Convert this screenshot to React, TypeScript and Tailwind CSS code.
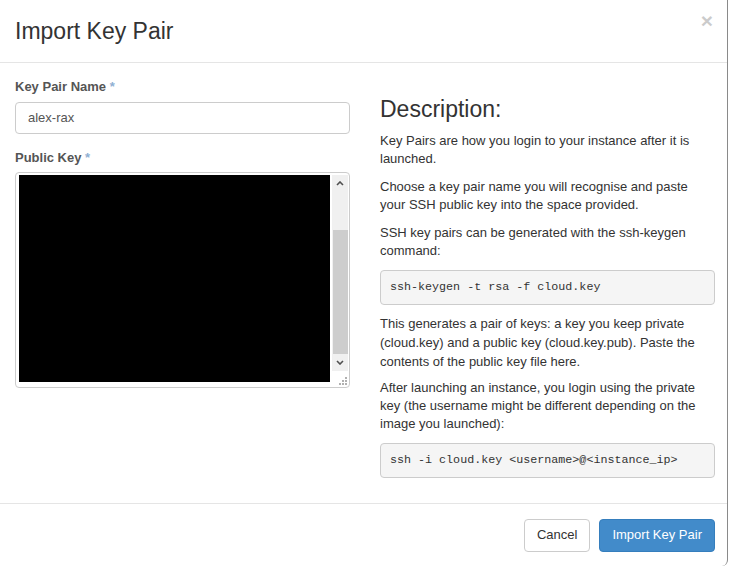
import React from "react";

const sans = "font-['Liberation_Sans',Arial,Helvetica,sans-serif]";
const mono = "font-['Liberation_Mono','Courier_New',monospace]";

function Label({ text }: { text: string }) {
  return (
    <label className="block mb-[5px] text-[13px] leading-[18.57px] font-bold text-[#555]">
      {text} <span className="text-[#8fb0d3]">*</span>
    </label>
  );
}

function FakeTextarea() {
  return (
    <div className="relative h-[216px] border border-[#ccc] rounded-[4px] bg-white pt-[2px] pl-[3px] pr-[1px] flex">
      {/* redacted key contents */}
      <div className="w-[312px] h-[207px] bg-black" />
      <div className="ml-[2px] w-[16px] h-[196px] bg-[#f0f0f0] flex flex-col items-center">
        <div className="h-[17px] w-full flex items-center justify-center">
          <svg width="8" height="5" viewBox="0 0 8 5">
            <path d="M1 4 L4 1 L7 4" fill="none" stroke="#505050" strokeWidth="1.6" />
          </svg>
        </div>
        <div className="mt-[38px] w-[15px] h-[124px] bg-[#cdcdcd]" />
        <div className="mt-auto h-[17px] w-full flex items-center justify-center">
          <svg width="8" height="5" viewBox="0 0 8 5">
            <path d="M1 1 L4 4 L7 1" fill="none" stroke="#505050" strokeWidth="1.6" />
          </svg>
        </div>
      </div>
      {/* resize grip */}
      <svg className="absolute right-[1px] bottom-[1px]" width="10" height="10" viewBox="0 0 10 10">
        <rect x="7" y="1" width="2" height="2" fill="#b0b0b0" />
        <rect x="4" y="4" width="2" height="2" fill="#b0b0b0" />
        <rect x="7" y="4" width="2" height="2" fill="#b0b0b0" />
        <rect x="1" y="7" width="2" height="2" fill="#b0b0b0" />
        <rect x="4" y="7" width="2" height="2" fill="#b0b0b0" />
        <rect x="7" y="7" width="2" height="2" fill="#b0b0b0" />
      </svg>
    </div>
  );
}

function Pre({ children, last }: { children: React.ReactNode; last?: boolean }) {
  return (
    <pre
      className={`${mono} ${last ? "h-[35px]" : ""} mb-[10px] border border-[#ccc] rounded-[4px] bg-[#f5f5f5] px-[9px] py-[8px] text-[11.7px] leading-[17px] text-[#333]`}
    >
      {children}
    </pre>
  );
}

export default function App() {
  return (
    <div className={`${sans} w-[731px] h-[567px] bg-white overflow-hidden text-[#333]`}>
      <div className="w-[728px] h-[566px] border-r border-[#8a8a8a] rounded-br-[6px] flex flex-col">
        {/* header */}
        <div className="h-[63px] border-b border-[#e5e5e5] pl-[15px] pr-[14px] flex items-start justify-between">
          <h4 className="mt-[15px] text-[23px] leading-[32px] text-[#333]">Import Key Pair</h4>
          <button className="mt-[10px] text-[21px] font-bold leading-[21px] text-black opacity-20">
            ×
          </button>
        </div>

        {/* body */}
        <div className="flex pl-[15px] pr-[12px] pt-[15px] pb-[15px] gap-[30px] text-[13px] leading-[18px]">
          <div className="w-[335px]">
            <div className="mb-[15px]">
              <Label text="Key Pair Name" />
              <div className="h-[32px] border border-[#ccc] rounded-[4px] px-[12px] flex items-center text-[#555]">
                alex-rax
              </div>
            </div>
            <div>
              <Label text="Public Key" />
              <FakeTextarea />
            </div>
          </div>

          <div className="w-[335px]">
            <h3 className="mt-[18px] mb-[10px] text-[23px] leading-[26.4px] text-[#333]">Description:</h3>
            <p className="mb-[10px]">Key Pairs are how you login to your instance after it is launched.</p>
            <p className="mb-[10px]">
              Choose a key pair name you will recognise and paste your SSH public key into the space provided.
            </p>
            <p className="mb-[10px]">SSH key pairs can be generated with the ssh-keygen command:</p>
            <Pre>ssh-keygen -t rsa -f cloud.key</Pre>
            <p className="mb-[8px] leading-[18.6px]">
              This generates a pair of keys: a key you keep private (cloud.key) and a public key (cloud.key.pub).
              Paste the contents of the public key file here.
            </p>
            <p className="mb-[10px]">
              After launching an instance, you login using the private key (the username might be different
              depending on the image you launched):
            </p>
            <Pre last>{"ssh -i cloud.key <username>@<instance_ip>"}</Pre>
          </div>
        </div>

        {/* footer */}
        <div className="border-t border-[#e5e5e5] pt-[15px] pr-[12px] flex justify-end gap-[9px] text-[13px] leading-[18.57px]">
          <button className="h-[33px] px-[12px] border border-[#ccc] rounded-[4px] bg-white text-[#333]">
            Cancel
          </button>
          <button className="h-[33px] px-[12px] border border-[#357ebd] rounded-[4px] bg-[#428bca] text-white">
            Import Key Pair
          </button>
        </div>
      </div>
    </div>
  );
}
